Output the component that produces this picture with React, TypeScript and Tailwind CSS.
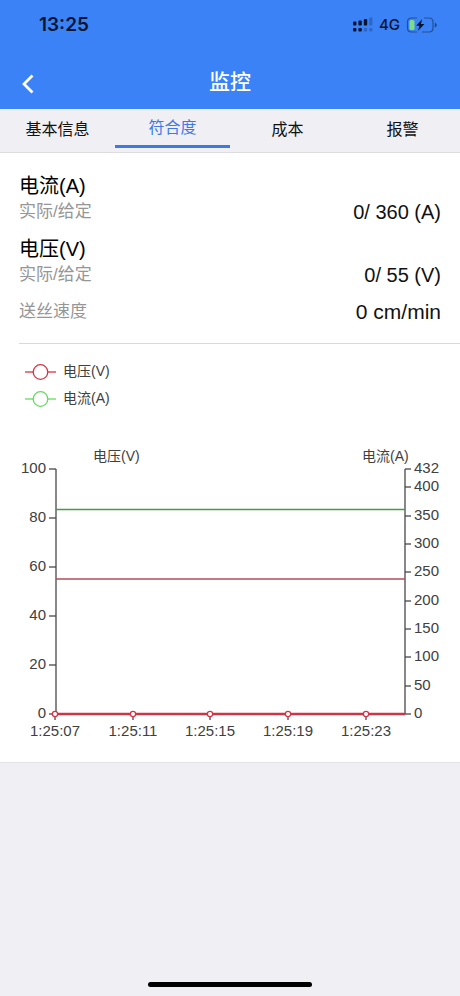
import React from "react";

const tabs = ["基本信息", "符合度", "成本", "报警"];
const leftTicks = [0, 20, 40, 60, 80, 100];
const rightTicks = [0, 50, 100, 150, 200, 250, 300, 350, 400, 432];
const times = ["1:25:07", "1:25:11", "1:25:15", "1:25:19", "1:25:23"];

const plot = { left: 56, right: 405, top: 125, bottom: 370 };
const height = plot.bottom - plot.top;
const voltY = (v: number) => Math.round(plot.bottom - (v * height) / 100);
const ampY = (a: number) => Math.round(plot.bottom - (a * height) / 432);
const timeX = (i: number) => Math.round(55 + i * 77.7);

function StatusBar() {
  return (
    <div className="flex h-[50px] items-center justify-between pr-[22px] pl-[39px]">
      <span className="font-[Inter,sans-serif] text-[19px] font-semibold text-[#07142e]">13:25</span>
      <div className="flex items-center text-[#07142e]">
        <svg width="20" height="16" viewBox="0 0 20 16" fill="currentColor" aria-hidden="true">
          <rect x="0" y="4.5" width="3.4" height="4" rx="1" />
          <rect x="5.4" y="3.5" width="3.4" height="5" rx="1" />
          <rect x="10.8" y="2" width="3.4" height="6.5" rx="1" />
          <rect x="16.2" y="0.5" width="3.2" height="8" rx="1" opacity="0.25" />
          <rect x="0" y="11" width="3.4" height="3.6" rx="1" />
          <rect x="5.4" y="11" width="3.4" height="3.6" rx="1" />
          <rect x="10.8" y="11" width="3.4" height="3.6" rx="1" opacity="0.25" />
          <rect x="16.2" y="11" width="3.2" height="3.6" rx="1" opacity="0.25" />
        </svg>
        <span className="ml-1.5 font-[Inter,sans-serif] text-[15px] font-medium">4G</span>
        <svg className="ml-1.5" width="32" height="16" viewBox="0 0 32 16" aria-hidden="true">
          <path
            d="M11 1H5.5Q1.5 1 1.5 5V11Q1.5 15 5.5 15H11M18 1H23Q27 1 27 5V11Q27 15 23 15H16"
            fill="none"
            stroke="#235098"
            strokeWidth="1.2"
          />
          <path d="M28.8 5.5Q30.8 6.5 30.8 8Q30.8 9.5 28.8 10.5Z" fill="#1c4585" />
          <rect x="3.5" y="3" width="5" height="10" rx="1.5" fill="#7ddc86" />
          <path d="M16.2 2L10.2 8.8H13.5L12 14L18.4 7H14.9Z" fill="#07142e" />
        </svg>
      </div>
    </div>
  );
}

function Reading({ title, label, value }: { title?: string; label: string; value: string }) {
  return (
    <div>
      {title && <h2 className="text-[20px] leading-[26px] text-black">{title}</h2>}
      <div className="flex items-center justify-between leading-[26px]">
        <span className="text-[17px] text-[#969696]">{label}</span>
        <span className={title ? "text-[20px] text-[#111]" : "text-[21px] text-[#111]"}>{value}</span>
      </div>
    </div>
  );
}

function Chart() {
  return (
    <svg
      className="block w-full"
      viewBox="0 0 460 418"
      role="img"
      aria-label="电压(V) 电流(A)"
      fill="#404040"
      fontSize="15"
    >
      <g strokeWidth="1.3" fill="#fff">
        <g stroke="#d43348">
          <path d="M25 28H56" />
          <circle cx="40.5" cy="28" r="7.3" />
        </g>
        <g stroke="#65db5e">
          <path d="M25 55H56" />
          <circle cx="40.5" cy="55" r="7.3" />
        </g>
      </g>
      <g fontSize="14">
        <text x="63" y="32">电压(V)</text>
        <text x="63" y="59">电流(A)</text>
        <text x="93" y="117">电压(V)</text>
        <text x="362" y="117">电流(A)</text>
      </g>

      <g stroke="#484848" strokeWidth="1.3">
        <path d={`M${plot.left} ${plot.top}V${plot.bottom}`} />
        <path d={`M${plot.right} ${plot.top}V${plot.bottom}`} />
        {leftTicks.map((v) => (
          <path key={v} d={`M49 ${voltY(v)}h7`} />
        ))}
        {rightTicks.map((a) => (
          <path key={a} d={`M405 ${ampY(a)}h6`} />
        ))}
        {times.map((t, i) => (
          <path key={t} d={`M${timeX(i)} 370v6`} />
        ))}
      </g>

      {leftTicks.map((v) => (
        <text key={v} x="46" y={voltY(v) + 4} textAnchor="end">{v}</text>
      ))}
      {rightTicks.map((a) => (
        <text key={a} x="414" y={ampY(a) + 4}>{a}</text>
      ))}
      {times.map((t, i) => (
        <text key={t} x={timeX(i)} y="392" textAnchor="middle">{t}</text>
      ))}

      <path d={`M56 ${ampY(360) - 0.5}H405`} stroke="#489b45" strokeWidth="1.4" />
      <path d={`M56 ${voltY(55)}H405`} stroke="#b34c59" strokeWidth="1.4" />
      <path d="M56 370H405" stroke="#cc3545" strokeWidth="2.6" />
      {times.map((t, i) => (
        <circle key={t} cx={timeX(i)} cy="370" r="2.6" fill="#fff" stroke="#d43348" strokeWidth="1.2" />
      ))}
    </svg>
  );
}

export default function App() {
  return (
    <div className="flex min-h-screen flex-col bg-[#efeff4] font-['Liberation_Sans','Noto_Sans_CJK_SC',sans-serif]">
      <header className="bg-[#3a82f6]">
        <StatusBar />
        <div className="grid h-[59px] grid-cols-[1fr_auto_1fr] items-center pt-1">
          <button type="button" aria-label="返回" className="flex size-14 items-center justify-center pt-1 text-white">
            <svg width="14" height="20" viewBox="0 0 14 20" fill="none" stroke="currentColor" strokeWidth="2.8" aria-hidden="true">
              <path d="M11.5 1.5L3 10L11.5 18.5" />
            </svg>
          </button>
          <h1 className="text-[21px] font-medium text-white">监控</h1>
        </div>
      </header>

      <nav className="flex h-11 border-b border-[#dcdce0]">
        {tabs.map((tab, i) => (
          <button
            key={tab}
            type="button"
            aria-current={i === 1 ? "page" : undefined}
            className={
              i === 1
                ? "mb-1 flex-1 border-b-3 border-[#3c79e6] pt-0.5 text-[16px] text-[#3c79e6]"
                : "flex-1 pb-0.5 text-[16px] text-[#111]"
            }
          >
            {tab}
          </button>
        ))}
      </nav>

      <main className="border-b border-[#e2e2e6] bg-white">
        <section className="ml-[19px] border-b border-[#d9d9d9] pt-5 pr-[19px] pb-[18px]">
          <div className="flex flex-col gap-[11px]">
            <Reading title="电流(A)" label="实际/给定" value="0/ 360 (A)" />
            <Reading title="电压(V)" label="实际/给定" value="0/ 55 (V)" />
            <Reading label="送丝速度" value="0 cm/min" />
          </div>
        </section>
        <Chart />
      </main>

      <footer className="mt-auto flex justify-center pb-[9px]">
        <div className="h-[5px] w-[164px] rounded-full bg-black" />
      </footer>
    </div>
  );
}
